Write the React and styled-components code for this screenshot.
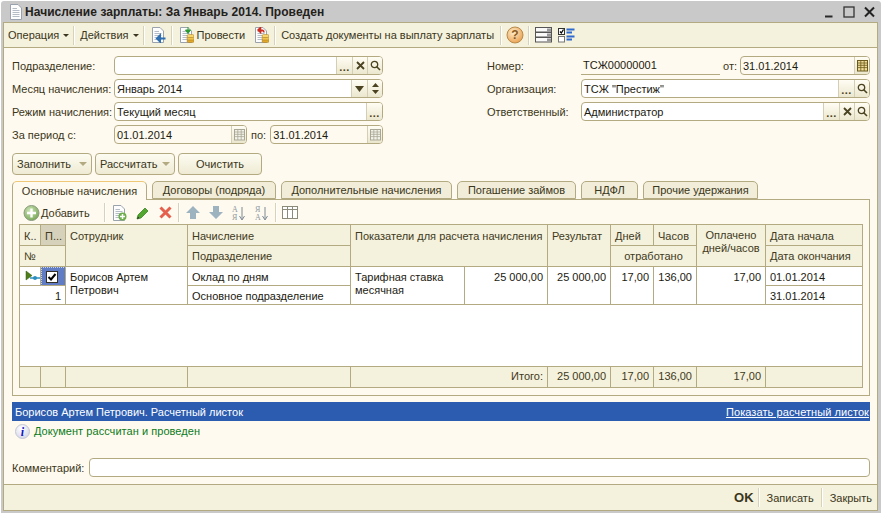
import React from 'react';
import styled, { createGlobalStyle } from 'styled-components';

const tan = '#b3aa82';
const cream = '#fffaef';
const bar = '#f4f1dc';
const ink = '#2f2b1c';

const Global = createGlobalStyle`
  html, body { margin: 0; padding: 0; background: #fff; }
  body { font: 11px "Liberation Sans", Arial, sans-serif; color: ${ink}; }
`;

const Win = styled.div`
  box-sizing: border-box; width: 880px; height: 512px; margin: 1px 0 0 1px;
  padding: 0 3px 2px 2px; background: #c9c9c9; border-radius: 3px 3px 0 0;
  display: flex; flex-direction: column; overflow: hidden;
`;
const TitleBar = styled.div`
  height: 21px; flex: none; display: flex; align-items: center; padding-left: 5px;
`;
const TitleText = styled.div`
  font-weight: bold; font-size: 12px; letter-spacing: 0.05px; color: #23211a; margin-left: 1px; padding-top: 1px; flex: 1;
`;
const WinButtons = styled.div`
  display: flex; align-items: center; gap: 9px; margin-right: 3px;
`;
const Inner = styled.div`
  flex: 1; min-height: 0; border: 1px solid ${tan}; background: ${cream}; display: flex; flex-direction: column;
`;
const Toolbar = styled.div`
  height: 24px; flex: none; box-sizing: content-box; background: ${bar}; border-bottom: 1px solid ${tan};
  display: flex; align-items: center;
`;
const ToolText = styled.span`
  margin-left: ${p => p.$ml || 0}px; white-space: nowrap; color: #3a3620;
`;
const Caret = styled.i`
  width: 0; height: 0; border: 3px solid transparent; border-top: 3px solid #3a3620; border-bottom: 0;
  margin-left: ${p => p.$ml || 5}px; display: block;
`;
const Sep = styled.i`
  width: 1px; height: 19px; background: #d8d3b8; border-right: 1px solid #fff; display: block;
  margin-left: ${p => p.$ml || 0}px;
`;
const Ico = styled.svg`
  display: block; flex: none; margin-left: ${p => p.$ml || 0}px;
`;

const Body = styled.div`
  flex: 1; min-height: 0; padding: 8px 7px 0 8px; display: flex; flex-direction: column;
`;
const Form = styled.div`
  display: flex; gap: 104px; height: 88px; flex: none;
`;
const FormCol = styled.div`
  width: ${p => p.$w}px; display: flex; flex-direction: column; gap: 4px;
`;
const Row = styled.div`
  display: flex; align-items: center; height: 19px;
`;
const Label = styled.label`
  width: ${p => p.$w || 102}px; flex: none; white-space: nowrap; color: #3a3620;
`;
const Field = styled.div`
  box-sizing: border-box; height: 19px; width: ${p => (p.$w ? p.$w + 'px' : 'auto')}; flex: ${p => (p.$w ? 'none' : 1)};
  border: 1px solid ${tan}; border-radius: 4px; background: ${p => (p.$ro ? cream : '#fff')};
  display: flex; align-items: stretch; overflow: hidden;
`;
const FieldText = styled.div`
  flex: 1; padding-left: 2px; line-height: 18px; color: #1c1a10; white-space: nowrap;
`;
const FieldBtn = styled.div`
  width: ${p => p.$w || 14}px; flex: none; border-left: 1px solid #d4cfb4;
  background: linear-gradient(#fffdf4, #ebe7ce); display: flex; align-items: center; justify-content: center;
  color: #4a4220; font-weight: bold; font-size: 11px; line-height: 17px;
`;
const Dots = styled.span`
  position: relative; top: 2px; letter-spacing: 0.5px;
`;
const Small = styled.span`
  margin: 0 ${p => p.$mr || 4}px 0 ${p => p.$ml || 4}px; color: #3a3620; white-space: nowrap;
`;
const NumberValue = styled.div`
  width: 139px; height: 19px; box-sizing: border-box; border-bottom: 1px solid ${tan};
  padding-left: 2px; line-height: 18px; color: #1c1a10; flex: none;
`;

const Buttons = styled.div`
  display: flex; gap: 3px; margin-top: 9px; flex: none;
`;
const Btn = styled.div`
  box-sizing: border-box; width: ${p => p.$w}px; height: 22px; border: 1px solid ${tan}; border-radius: 4px;
  background: linear-gradient(#fdfcf2, #eeead3); display: flex; align-items: center; padding-left: ${p => (p.$center ? 0 : 4)}px; color: #3a3620;
  justify-content: ${p => (p.$center ? 'center' : 'flex-start')};
`;
const BtnCaret = styled.i`
  width: 0; height: 0; border: 4px solid transparent; border-top: 4px solid #b3aa82; border-bottom: 0;
  margin-left: auto; margin-right: 4px; display: block;
`;

const Tabs = styled.div`
  display: flex; gap: 5px; margin-top: 6px; height: 18px; flex: none;
`;
const Tab = styled.div`
  box-sizing: border-box; position: relative; width: ${p => p.$w}px; height: ${p => (p.$active ? 19 : 18)}px;
  z-index: ${p => (p.$active ? 2 : 0)};
  border: 1px solid ${tan}; border-bottom: ${p => (p.$active ? 0 : `1px solid ${tan}`)};
  border-top: 1px solid ${p => (p.$active ? '#eec777' : tan)};
  border-radius: 5px 5px 0 0; background: ${p => (p.$active ? cream : '#f1edd8')};
  display: flex; align-items: center; justify-content: center; color: #3a3620; white-space: nowrap;
`;
const Panel = styled.div`
  box-sizing: border-box; height: 197px; flex: none; border: 1px solid ${tan}; padding: 3px 6px 0;
  display: flex; flex-direction: column;
`;
const SubBar = styled.div`
  height: 19px; display: flex; align-items: center; margin-bottom: 2px; flex: none;
`;
const Grid = styled.div`
  box-sizing: border-box; width: 844px; height: 164px; border: 1px solid ${tan}; background: #fff;
  display: grid; grid-template-columns: 21px 25px 122px 163px 197px 63px 43px 43px 69px 96px;
  grid-template-rows: 21px 21px 19px 19px 1fr 20px;
`;
const Cell = styled.div`
  box-sizing: border-box; grid-column: ${p => p.$c}; grid-row: ${p => p.$r};
  border-right: ${p => (p.$last ? 0 : `1px solid ${tan}`)};
  border-bottom: ${p => (p.$nob ? 0 : `1px solid ${tan}`)};
  padding: 0 ${p => p.$pr ?? 4}px 0 4px; line-height: ${p => p.$lh || 20}px;
  text-align: ${p => p.$al || 'left'}; white-space: nowrap; overflow: hidden;
`;
const Head = styled(Cell)`
  background: ${p => (p.$on ? '#d6d1bb' : bar)}; color: #3f3a22;
`;
const Data = styled(Cell)`
  color: #1c1a10; line-height: 17px; padding-top: 2px;
`;
const Foot = styled(Cell)`
  background: ${bar}; color: #3f3a22; line-height: 19px;
`;
const Wrap = styled.div`
  white-space: normal; line-height: 13px; padding-top: 2px;
`;
const HeadTwo = styled.div`
  white-space: normal; line-height: 13px; padding-top: 4px; text-align: center;
`;
const Split = styled(Cell)`
  padding: 0; display: flex; color: #1c1a10;
`;
const SplitLeft = styled.div`
  width: 114px; box-sizing: border-box; padding: 4px 4px 0; white-space: normal; line-height: 13px; border-right: 1px solid ${tan};
`;
const SplitRight = styled.div`
  flex: 1; text-align: right; padding: 2px 4px 0 0; line-height: 17px;
`;
const MarkCell = styled.div`
  grid-column: 2; grid-row: 3; box-sizing: border-box; background: #5f7cc4; border: 1px dotted #c9d3ee;
  border-right: 1px solid ${tan}; border-bottom: 1px solid ${tan}; display: flex; align-items: center; justify-content: center;
  padding-right: 3px;
`;
const Check = styled.div`
  width: 12px; height: 12px; background: #fff; border: 1px solid #33302a; box-sizing: border-box;
  display: flex; align-items: center; justify-content: center;
`;
const Blue = styled.div`
  margin-top: 6px; height: 19px; flex: none; background: #2b5cb0; color: #fff; display: flex; justify-content: space-between;
  align-items: center; padding: 0 1px 0 3px;
`;
const Lnk = styled.a`
  color: #fff; text-decoration: underline; letter-spacing: 0.08px;
`;
const Info = styled.div`
  display: flex; align-items: center; height: 15px; margin-top: 3px; flex: none; color: #0b7a1c;
  padding-left: 3px; gap: 4px;
`;
const InfoText = styled.span`
  padding-bottom: 2px; letter-spacing: 0.05px;
`;
const CommentRow = styled.div`
  display: flex; align-items: center; height: 19px; margin-top: 19px; flex: none;
`;
const Footer = styled.div`
  margin-top: auto; flex: none; height: 25px; background: ${bar}; border-top: 1px solid ${tan};
  display: flex; align-items: center; justify-content: flex-end; padding-right: 5px; box-sizing: content-box;
`;
const Ok = styled.span`
  font-weight: bold; font-size: 13px; color: #3a3620;
`;
const FootLink = styled.span`
  color: #3a3620; margin-left: 7px; margin-right: 7px;
  &:last-child { margin-right: 0; }
`;

const S = ({ w = 16, h = 16, ml, children }) => (
  <Ico $ml={ml} width={w} height={h} viewBox={`0 0 ${w} ${h}`}>{children}</Ico>
);
const Paper = () => (
  <>
    <path d="M2.5 .5H10L13.5 4V15.5H2.5Z" fill="#fdfdfd" stroke="#9aa3ad" />
    <path d="M4.5 4.5H9M4.5 6.5H11.5M4.5 8.5H11.5M4.5 10.5H11.5M4.5 12.5H11.5" stroke="#b4bcc6" />
  </>
);
const Coins = () => (
  <>
    <rect x="9" y="12.5" width="7" height="3" rx="1.5" fill="#e0a92c" stroke="#a8781a" strokeWidth=".5" />
    <rect x="9" y="10" width="7" height="3" rx="1.5" fill="#f0c34c" stroke="#a8781a" strokeWidth=".5" />
    <rect x="9" y="7.5" width="7" height="3" rx="1.5" fill="#f6d56a" stroke="#a8781a" strokeWidth=".5" />
  </>
);
const Search = () => (
  <S w={11} h={11}><circle cx="4.5" cy="4.5" r="3.2" fill="none" stroke="#4a4220" strokeWidth="1.3" /><path d="M7 7L10 10" stroke="#4a4220" strokeWidth="1.6" /></S>
);
const Clear = () => (
  <S w={9} h={9}><path d="M1 1L8 8M8 1L1 8" stroke="#4a4220" strokeWidth="1.8" /></S>
);
const Cal = ({ dim }) => {
  const c = dim ? '#a9a795' : '#6b5a1c';
  return (
    <S w={11} h={13}>
      <rect x=".5" y="1.5" width="10" height="10.5" fill={dim ? '#f4f3ea' : '#f0dc9a'} stroke={c} />
      <path d="M.5 4H10.500M.5 6.300H10.500M.5 8.600H10.500M3.800 1.500V12M7.200 1.500V12" stroke={c} strokeWidth=".8" />
    </S>
  );
};
const FieldEnd = ({ dots, clear, search, cal, dim, w }) => (
  <>
    {dots && <FieldBtn $w={15}><Dots>...</Dots></FieldBtn>}
    {clear && <FieldBtn><Clear /></FieldBtn>}
    {search && <FieldBtn><Search /></FieldBtn>}
    {cal && <FieldBtn $w={w || 14}><Cal dim={dim} /></FieldBtn>}
  </>
);

const tabs = [
  ['Основные начисления', 135, true],
  ['Договоры (подряда)', 124],
  ['Дополнительные начисления', 171],
  ['Погашение займов', 119],
  ['НДФЛ', 57],
  ['Прочие удержания', 115],
];

export default function App() {
  return (
    <>
      <Global />
      <Win>
        <TitleBar>
          <S><Paper /></S>
          <TitleText>Начисление зарплаты: За Январь 2014. Проведен</TitleText>
          <WinButtons>
            <S w={10} h={12}><path d="M1 10.500H8.500" stroke="#2a2a2a" strokeWidth="2" /></S>
            <S w={12} h={12}><rect x="1" y="1" width="10" height="10" fill="none" stroke="#333" strokeWidth="1.300" /></S>
            <S w={11} h={12}><path d="M1 1.500L10 10.500M10 1.500L1 10.500" stroke="#222" strokeWidth="2" /></S>
          </WinButtons>
        </TitleBar>
        <Inner>
          <Toolbar>
            <ToolText $ml={4}>Операция</ToolText><Caret $ml={4} />
            <Sep $ml={4} />
            <ToolText $ml={5}>Действия</ToolText><Caret $ml={5} />
            <Sep $ml={4} />
            <S ml={5}>
              <Paper />
              <path d="M15.500 11.500H7.500M7 11.500L10 8.500V14.500Z" stroke="#2d6fb0" strokeWidth="2" fill="#2d6fb0" />
            </S>
            <Sep $ml={5} />
            <S ml={5}>
              <Paper /><Coins />
              <path d="M10 0V4M7.500 3L10 6.500L12.500 3Z" stroke="#2b9a32" fill="#2b9a32" />
            </S>
            <ToolText $ml={2}>Провести</ToolText>
            <S ml={8}>
              <Paper /><Coins />
              <path d="M11 5.500C11 3 9 3 6 3M7.500 .5L5 3L7.500 5.500Z" stroke="#d02b1e" fill="none" strokeWidth="1.500" />
            </S>
            <Sep $ml={5} />
            <ToolText $ml={5}>Создать документы на выплату зарплаты</ToolText>
            <Sep $ml={6} />
            <S w={18} h={18} ml={4}>
              <defs>
                <radialGradient id="hg" cx=".4" cy=".35" r=".75"><stop offset="0" stopColor="#fdeccb" /><stop offset="1" stopColor="#e89a45" /></radialGradient>
              </defs>
              <circle cx="9" cy="9" r="8" fill="url(#hg)" stroke="#b98a4a" />
              <text x="9" y="13" textAnchor="middle" fontSize="12" fontWeight="bold" fontFamily="Liberation Sans" fill="#8a5a20">?</text>
            </S>
            <Sep $ml={4} />
            <S w={17} h={16} ml={5}>
              {[0.5, 5.5, 10.5].map(y => (
                <g key={y}>
                  <rect x=".5" y={y} width="16" height="4.500" fill="#fafafa" stroke="#555" />
                  <rect x="12" y={y + 1} width="4" height="3" fill="#999" />
                </g>
              ))}
            </S>
            <S w={17} h={16} ml={6}>
              <rect x=".5" y="1.500" width="6" height="6" fill="#fff" stroke="#333" />
              <path d="M2 4.500L3.300 6L5.500 2.500" stroke="#000" strokeWidth="1.300" fill="none" />
              <rect x=".5" y="9.500" width="6" height="5.500" fill="#fff" stroke="#777" />
              <path d="M8.500 2.500H16.500M8.500 5.500H14M8.500 9.500H16.500M8.500 12.500H14" stroke="#2f6bcf" strokeWidth="1.800" />
            </S>
          </Toolbar>
          <Body>
            <Form>
              <FormCol $w={371}>
                <Row>
                  <Label>Подразделение:</Label>
                  <Field><FieldText /><FieldEnd dots clear search /></Field>
                </Row>
                <Row>
                  <Label>Месяц начисления:</Label>
                  <Field>
                    <FieldText>Январь 2014</FieldText>
                    <FieldBtn $w={15}><S w={9} h={6}><path d="M0 0H9L4.500 6Z" fill="#4a4220" /></S></FieldBtn>
                    <FieldBtn><S w={7} h={11}><path d="M3.500 0L7 4H0ZM3.500 11L0 7H7Z" fill="#4a4220" /></S></FieldBtn>
                  </Field>
                </Row>
                <Row>
                  <Label>Режим начисления:</Label>
                  <Field><FieldText>Текущий месяц</FieldText><FieldEnd dots /></Field>
                </Row>
                <Row>
                  <Label>За период с:</Label>
                  <Field $w={133} $ro><FieldText>01.01.2014</FieldText><FieldEnd cal dim /></Field>
                  <Small>по:</Small>
                  <Field $ro><FieldText>31.01.2014</FieldText><FieldEnd cal dim /></Field>
                </Row>
              </FormCol>
              <FormCol $w={383}>
                <Row>
                  <Label $w={94}>Номер:</Label>
                  <NumberValue>ТСЖ00000001</NumberValue>
                  <Small $ml={3} $mr={3}>от:</Small>
                  <Field $ro><FieldText>31.01.2014</FieldText><FieldEnd cal /></Field>
                </Row>
                <Row>
                  <Label $w={94}>Организация:</Label>
                  <Field><FieldText>ТСЖ "Престиж"</FieldText><FieldEnd dots search /></Field>
                </Row>
                <Row>
                  <Label $w={94}>Ответственный:</Label>
                  <Field><FieldText>Администратор</FieldText><FieldEnd dots clear search /></Field>
                </Row>
              </FormCol>
            </Form>
            <Buttons>
              <Btn $w={80}>Заполнить<BtnCaret /></Btn>
              <Btn $w={80}>Рассчитать<BtnCaret /></Btn>
              <Btn $w={84} $center>Очистить</Btn>
            </Buttons>
            <Tabs>
              {tabs.map(([t, w, a]) => <Tab key={t} $w={w} $active={a}>{t}</Tab>)}
            </Tabs>
            <Panel>
              <SubBar>
                <S w={18} h={18} ml={4}>
                  <defs>
                    <radialGradient id="ag" cx=".4" cy=".35" r=".75"><stop offset="0" stopColor="#cfe6b8" /><stop offset="1" stopColor="#6ea24e" /></radialGradient>
                  </defs>
                  <circle cx="8.500" cy="9" r="7.500" fill="url(#ag)" stroke="#8c9a80" />
                  <path d="M8.500 4.500V13.500M4 9H13" stroke="#fff" strokeWidth="2.400" />
                </S>
                <ToolText><u>Д</u>обавить</ToolText>
                <Sep $ml={14} />
                <S ml={5}>
                  <Paper />
                  <circle cx="11.500" cy="11.500" r="4" fill="#6fae4e" />
                  <path d="M11.500 9V14M9 11.500H14" stroke="#fff" strokeWidth="1.500" />
                </S>
                <S ml={9} w={14} h={14}>
                  <path d="M1 13L2 9L9 2L12 5L5 12Z" fill="#52a82e" stroke="#2e7a1a" strokeWidth=".7" />
                  <path d="M1 13L2 10.500L3.500 12Z" fill="#333" />
                </S>
                <S ml={9} w={13} h={13}><path d="M1.500 1.500L11.500 11.500M11.500 1.500L1.500 11.500" stroke="#e5604c" strokeWidth="3" /></S>
                <Sep $ml={6} />
                <S ml={6} w={14} h={13}><path d="M7 0L14 7H10V13H4V7H0Z" fill="#9db3c0" /></S>
                <S ml={9} w={14} h={13}><path d="M7 13L14 6H10V0H4V6H0Z" fill="#9db3c0" /></S>
                <S ml={9} w={14} h={16}>
                  <text x="0" y="7" fontSize="8" fontFamily="Liberation Serif" fill="#8f98a0">А</text>
                  <text x="0" y="15" fontSize="8" fontFamily="Liberation Serif" fill="#8f98a0">Я</text>
                  <path d="M10 2V14M7.500 11L10 15L12.500 11" stroke="#7d8a94" fill="none" />
                </S>
                <S ml={9} w={14} h={16}>
                  <text x="0" y="7" fontSize="8" fontFamily="Liberation Serif" fill="#8f98a0">Я</text>
                  <text x="0" y="15" fontSize="8" fontFamily="Liberation Serif" fill="#8f98a0">А</text>
                  <path d="M10 2V14M7.500 11L10 15L12.500 11" stroke="#7d8a94" fill="none" />
                </S>
                <Sep $ml={6} />
                <S ml={5}>
                  <rect x=".5" y="1.500" width="15" height="12" fill="#fff" stroke="#8c8a78" />
                  <path d="M.5 4.500H15.500M5.500 1.500V13.500M10.500 1.500V13.500" stroke="#8c8a78" />
                </S>
              </SubBar>
              <Grid>
                <Head $c="1" $r="1" $lh={22}>К..</Head>
                <Head $c="2" $r="1" $on $lh={22}>П...</Head>
                <Head $c="3" $r="1 / 3" $lh={22}>Сотрудник</Head>
                <Head $c="4" $r="1" $lh={22}>Начисление</Head>
                <Head $c="5" $r="1 / 3" $lh={22}>Показатели для расчета начисления</Head>
                <Head $c="6" $r="1 / 3" $lh={22}>Результат</Head>
                <Head $c="7" $r="1" $lh={22}>Дней</Head>
                <Head $c="8" $r="1" $lh={22}>Часов</Head>
                <Head $c="9" $r="1 / 3"><HeadTwo>Оплачено дней/часов</HeadTwo></Head>
                <Head $c="10" $r="1" $last $lh={22}>Дата начала</Head>
                <Head $c="1 / 3" $r="2">№</Head>
                <Head $c="4" $r="2">Подразделение</Head>
                <Head $c="7 / 9" $r="2" $al="center">отработано</Head>
                <Head $c="10" $r="2" $last>Дата окончания</Head>

                <Data $c="1" $r="3" $pr={0}>
                  <S w={16} h={14}>
                    <path d="M2 2L8 6.500L2 11Z" fill="#4f7d1a" stroke="#2f5a10" strokeWidth=".5" />
                    <path d="M6 9H16" stroke="#2a8fc0" strokeWidth="1.500" />
                    <circle cx="11" cy="9" r="2" fill="#2a8fc0" />
                  </S>
                </Data>
                <MarkCell>
                  <Check>
                    <S w={10} h={10}><path d="M1.500 5L4 7.500L8.500 2" stroke="#000" strokeWidth="2" fill="none" /></S>
                  </Check>
                </MarkCell>
                <Data $c="1 / 3" $r="4" $al="right">1</Data>
                <Data $c="3" $r="3 / 5"><Wrap>Борисов Артем Петрович</Wrap></Data>
                <Data $c="4" $r="3">Оклад по дням</Data>
                <Data $c="4" $r="4">Основное подразделение</Data>
                <Split $c="5" $r="3 / 5">
                  <SplitLeft>Тарифная ставка месячная</SplitLeft>
                  <SplitRight>25 000,00</SplitRight>
                </Split>
                <Data $c="6" $r="3 / 5" $al="right">25 000,00</Data>
                <Data $c="7" $r="3 / 5" $al="right">17,00</Data>
                <Data $c="8" $r="3 / 5" $al="right">136,00</Data>
                <Data $c="9" $r="3 / 5" $al="right">17,00</Data>
                <Data $c="10" $r="3" $last>01.01.2014</Data>
                <Data $c="10" $r="4" $last>31.01.2014</Data>
                <Cell $c="1 / -1" $r="5" $last />

                <Foot $c="1" $r="6" $nob />
                <Foot $c="2" $r="6" $nob />
                <Foot $c="3" $r="6" $nob />
                <Foot $c="4" $r="6" $nob />
                <Foot $c="5" $r="6" $nob $al="right">Итого:</Foot>
                <Foot $c="6" $r="6" $nob $al="right">25 000,00</Foot>
                <Foot $c="7" $r="6" $nob $al="right">17,00</Foot>
                <Foot $c="8" $r="6" $nob $al="right">136,00</Foot>
                <Foot $c="9" $r="6" $nob $al="right">17,00</Foot>
                <Foot $c="10" $r="6" $nob $last />
              </Grid>
            </Panel>
            <Blue>
              <span>Борисов Артем Петрович. Расчетный листок</span>
              <Lnk>Показать расчетный листок</Lnk>
            </Blue>
            <Info>
              <S w={15} h={15}>
                <defs>
                  <radialGradient id="ig" cx=".4" cy=".3" r=".8"><stop offset="0" stopColor="#fff" /><stop offset="1" stopColor="#cfd3e6" /></radialGradient>
                </defs>
                <circle cx="7.500" cy="7.500" r="7" fill="url(#ig)" stroke="#c4c7d4" />
                <text x="7.500" y="12" textAnchor="middle" fontSize="12" fontWeight="bold" fontStyle="italic" fontFamily="Liberation Serif" fill="#1414c8">i</text>
              </S>
              <InfoText>Документ рассчитан и проведен</InfoText>
            </Info>
            <CommentRow>
              <Label $w={77}>Комментарий:</Label>
              <Field><FieldText /></Field>
            </CommentRow>
          </Body>
          <Footer>
            <Ok>OK</Ok>
            <Sep $ml={4} />
            <FootLink>Записать</FootLink>
            <Sep />
            <FootLink>Закрыть</FootLink>
          </Footer>
        </Inner>
      </Win>
    </>
  );
}
